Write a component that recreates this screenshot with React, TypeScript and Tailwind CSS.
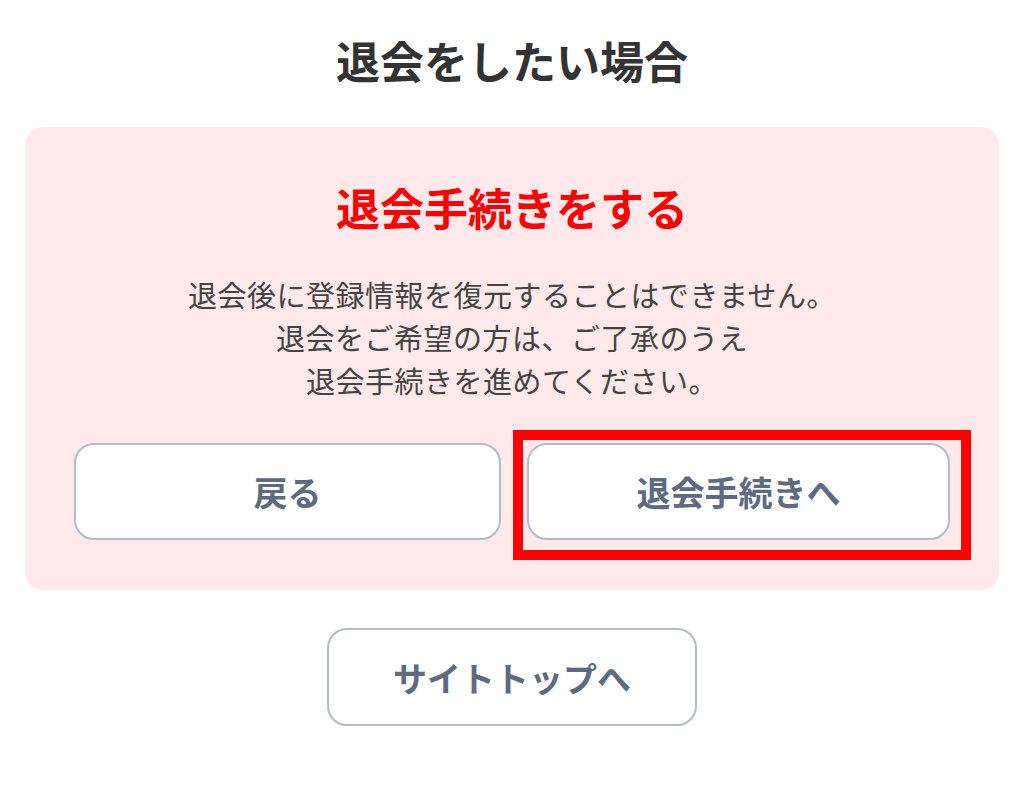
export default function App() {
  return (
    <div
      className="flex min-h-[800px] w-full flex-col items-center bg-white"
      style={{ fontFamily: '"Noto Sans CJK JP", "Noto Sans", sans-serif' }}
    >
      <h1 className="mt-[36px] text-[44px] font-bold leading-[48px] text-[#333333]">
        退会をしたい場合
      </h1>

      <section className="mt-[43px] w-[974px] rounded-[18px] bg-[#ffe9ea] px-[49px] pb-[50px] pt-[56px]">
        <h2 className="text-center text-[44px] font-bold leading-[48px] text-[#ff0000]">
          退会手続きをする
        </h2>
        <p className="mt-[42px] text-center text-[29px] leading-[43px] tracking-[0.5px] text-[#444444]">
          退会後に登録情報を復元することはできません。
          <br />
          退会をご希望の方は、ご了承のうえ
          <br />
          退会手続きを進めてください。
        </p>
        <div className="mt-[41px] flex gap-[26px]">
          <button
            type="button"
            className="h-[97px] flex-1 rounded-[20px] border-2 border-[#b2bccd] bg-white text-[34px] font-bold text-[#5d6b82]"
          >
            戻る
          </button>
          <div className="relative flex-1">
            <button
              type="button"
              className="h-[97px] w-full rounded-[20px] border-2 border-[#b2bccd] bg-white text-[34px] font-bold text-[#5d6b82]"
            >
              退会手続きへ
            </button>
            {/* annotation frame */}
            <div className="pointer-events-none absolute -bottom-[20px] -left-[14px] -right-[21px] -top-[13px] border-[10px] border-[#ff0000]" />
          </div>
        </div>
      </section>

      <button
        type="button"
        className="mt-[38px] h-[98px] w-[370px] rounded-[20px] border-2 border-[#b2bccd] bg-white text-[34px] font-bold text-[#5d6b82]"
      >
        サイトトップへ
      </button>
    </div>
  );
}
